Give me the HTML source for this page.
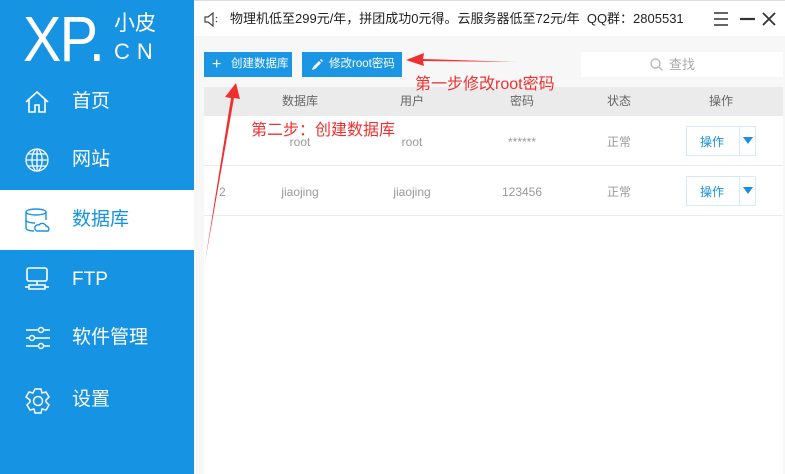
<!DOCTYPE html>
<html><head><meta charset="utf-8"><style>
*{margin:0;padding:0;box-sizing:border-box}
body{width:785px;height:474px;overflow:hidden;font-family:"Liberation Sans","Noto Sans CJK SC",sans-serif;background:#f7f7f7;position:relative}
.side{position:absolute;left:0;top:0;width:194px;height:474px;background:#1793e3;color:#fff}
.logo{position:absolute;left:23px;top:7px;font-size:64px;line-height:64px;font-family:"Liberation Sans",sans-serif;letter-spacing:-2px;transform:scaleX(0.9);transform-origin:left}
.logo2{position:absolute;left:114px;top:12px;font-size:21px;line-height:24px}
.logo3{position:absolute;left:114px;top:39px;font-size:22px;letter-spacing:7px}
.item{position:absolute;left:0;width:194px;height:60px;font-size:19px;line-height:60px}
.item span{position:absolute;left:72px}
.item svg{position:absolute;left:24px;top:17px}
.sel{background:#fff;color:#1793e3}
.top{position:absolute;left:194px;top:0;width:591px;height:36px;background:#fff;border-top:1px solid #ddd;font-size:13px;line-height:36px;color:#222}
.btn{position:absolute;top:52px;height:25px;background:#1a96e4;color:#fff;font-size:11.5px;line-height:25px}
.search{position:absolute;left:581px;top:52px;width:202px;height:25px;background:#fff;color:#aaa;font-size:13px;line-height:25px}
.tbl{position:absolute;left:204px;top:87px;width:579px;height:387px;background:#fff}
.hd{height:29px;background:#ebebeb;color:#666;font-size:12px;line-height:29px;position:relative}
.row{height:50px;border-bottom:1px solid #e8ecef;position:relative;color:#999;font-size:12px;line-height:52px}
.c{position:absolute;text-align:center;width:100px;top:0}
.op{position:absolute;left:482px;top:10px;width:70px;height:30px;border:1px solid #d6ebf8;color:#1a8fe0;font-size:12px;line-height:30px}
.op i{position:absolute;left:52px;top:-1px;width:1px;height:30px;background:#d6ebf8}
.op b{position:absolute;left:56px;top:10px;border-left:5px solid transparent;border-right:5px solid transparent;border-top:7px solid #1a8fe0}
.red{position:absolute;color:#f03030;font-size:16px}
</style></head><body>
<div class="side">
<div class="logo">XP.</div><div class="logo2">小皮</div><div class="logo3">CN</div>
<div class="item" style="top:72px"><svg width="26" height="26" viewBox="0 0 26 26" fill="none" stroke="#fff" stroke-width="1.6"><path d="M2 13L13 3l11 10M5 11v12h6v-7h4v7h6V11"/></svg><span>首页</span></div>
<div class="item" style="top:130px"><svg width="26" height="26" viewBox="0 0 26 26" fill="none" stroke="#fff" stroke-width="1.3"><circle cx="13" cy="13" r="11"/><ellipse cx="13" cy="13" rx="5" ry="11"/><path d="M2 13h22M13 2v22M4 7h18M4 19h18"/></svg><span>网站</span></div>
<div class="item sel" style="top:190px"><svg width="26" height="26" viewBox="0 0 26 26" fill="none" stroke="#1793e3" stroke-width="1.4"><ellipse cx="12" cy="5" rx="10" ry="3"/><path d="M2 5v16c0 2 4 3 8 3M2 13c0 2 5 3 9 3M22 5v8"/><path d="M13 24h11a3 3 0 0 0-2-5a4 4 0 0 0-7-1a3 3 0 0 0-2 6z"/></svg><span>数据库</span></div>
<div class="item" style="top:250px"><svg width="26" height="26" viewBox="0 0 26 26" fill="none" stroke="#fff" stroke-width="1.6"><rect x="3" y="1" width="20" height="13" rx="2"/><path d="M13 14v4M5 18h16v4H5zM1 20h4M21 20h4"/></svg><span>FTP</span></div>
<div class="item" style="top:308px"><svg width="26" height="26" viewBox="0 0 26 26" fill="none" stroke="#fff" stroke-width="1.4"><path d="M2 5h24M2 13h24M2 21h24"/><circle cx="17" cy="5" r="2.5" fill="#1793e3"/><circle cx="8" cy="13" r="2.5" fill="#1793e3"/><circle cx="17" cy="21" r="2.5" fill="#1793e3"/></svg><span>软件管理</span></div>
<div class="item" style="top:370px"><svg width="28" height="28" viewBox="0 0 28 28" fill="none" stroke="#fff" stroke-width="1.5"><path d="M11 2h6l1 4 4-1 3 5-3 3 0 2 3 3-3 5-4-1-1 4h-6l-1-4-4 1-3-5 3-3v-2L2 10l3-5 4 1z"/><circle cx="14" cy="14" r="4.5"/></svg><span>设置</span></div>
</div>
<div class="top">
<svg style="position:absolute;left:10px;top:11px" width="16" height="15" viewBox="0 0 16 15" fill="none" stroke="#444" stroke-width="1.2"><path d="M1 5h3l5-4v13L4 10H1z M12 5l1 1M12 10l1-1"/></svg>
<span style="position:absolute;left:36px">物理机低至299元/年，拼团成功0元得。云服务器低至72元/年&nbsp;&nbsp;QQ群：2805531</span>
<svg style="position:absolute;left:520px;top:11px" width="62" height="14" viewBox="0 0 62 14" stroke="#333" stroke-width="1.4" fill="none"><path d="M0 1h14M0 7h14M0 13h14"/><path d="M26 7h15" stroke-width="2.2"/><path d="M49 1l12 12M61 1L49 13" stroke-width="1.8"/></svg>
</div>
<div class="btn" style="left:204px;width:88px"><span style="position:absolute;left:8px;font-size:16px">+</span><span style="position:absolute;left:27px">创建数据库</span></div>
<div class="btn" style="left:302px;width:100px"><svg style="position:absolute;left:10px;top:7px" width="11" height="11" viewBox="0 0 11 11"><path d="M0 11l1-3 6-6 2 2-6 6z M8 1l2 2 1-1-2-2z" fill="#fff"/></svg><span style="position:absolute;left:27px">修改root密码</span></div>
<div class="search"><svg style="position:absolute;left:69px;top:6px" width="13" height="13" viewBox="0 0 13 13" fill="none" stroke="#bbb" stroke-width="1.4"><circle cx="5.5" cy="5.5" r="4.5"/><path d="M9 9l3.5 3.5"/></svg><span style="position:absolute;left:88px">查找</span></div>
<div class="tbl">
<div class="hd"><div class="c" style="left:46px">数据库</div><div class="c" style="left:158px">用户</div><div class="c" style="left:268px">密码</div><div class="c" style="left:365px">状态</div><div class="c" style="left:467px">操作</div></div>
<div class="row"><div class="c" style="left:46px">root</div><div class="c" style="left:158px">root</div><div class="c" style="left:268px">******</div><div class="c" style="left:365px">正常</div><div class="op"><span style="position:absolute;left:13px">操作</span><i></i><b></b></div></div>
<div class="row"><span style="position:absolute;left:15px">2</span><div class="c" style="left:46px">jiaojing</div><div class="c" style="left:158px">jiaojing</div><div class="c" style="left:268px">123456</div><div class="c" style="left:365px">正常</div><div class="op"><span style="position:absolute;left:13px">操作</span><i></i><b></b></div></div>
</div>
<svg style="position:absolute;left:0;top:0" width="785" height="474"><path d="M205 262L231 98 225 97 236 83 240 99 234 98z" fill="#f03030"/><path d="M517 62L423 59 424 53 406 60 424 66 423 61z" fill="#f03030"/></svg>
<div class="red" style="left:415px;top:70px">第一步修改root密码</div>
<div class="red" style="left:251px;top:116px">第二步：创建数据库</div>
</body></html>
